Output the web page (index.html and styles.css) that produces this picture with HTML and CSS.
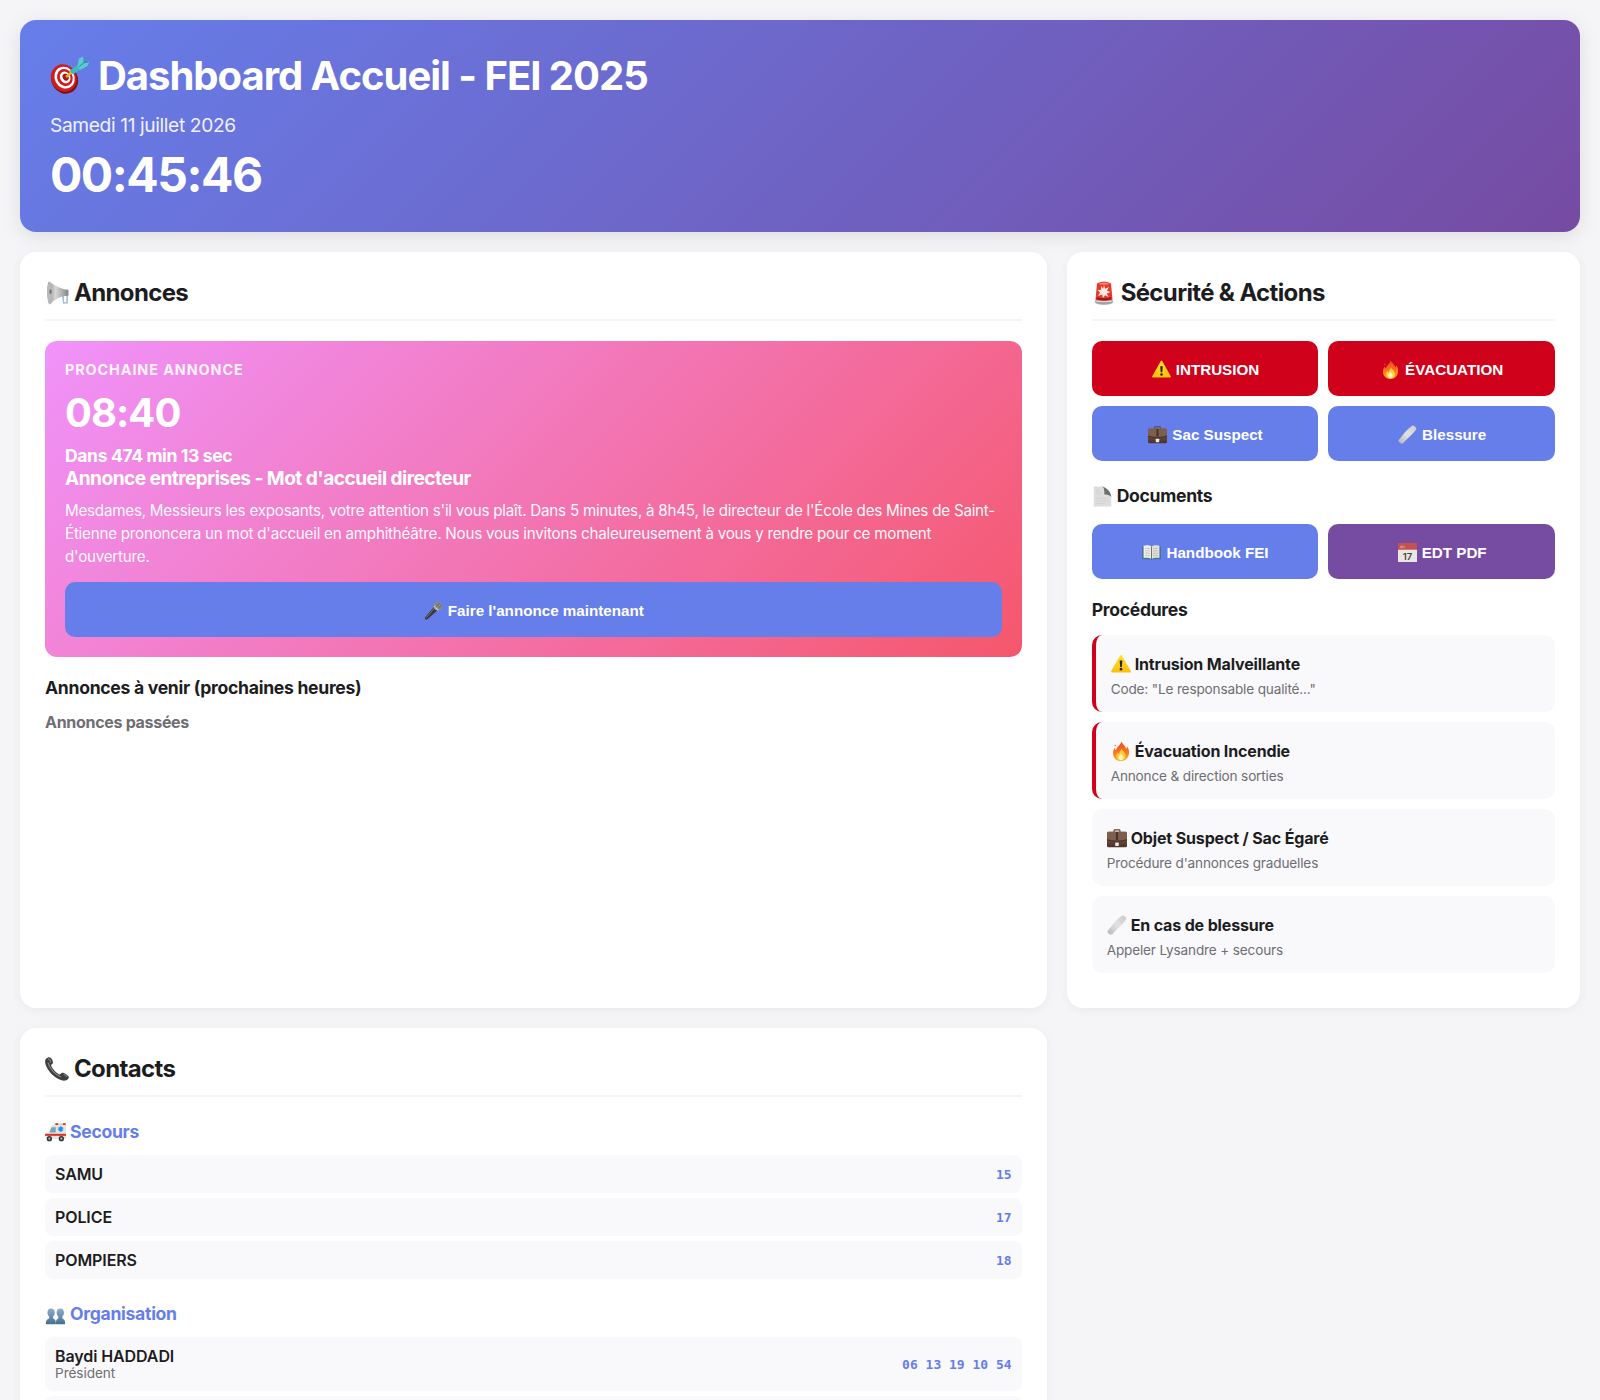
FILE: index.html
```html
<!DOCTYPE html>
<html lang="fr">
<head>
  <meta charset="UTF-8">
  <meta name="viewport" content="width=device-width, initial-scale=1.0">
  <title>Dashboard Accueil - FEI 2025</title>
  <link rel="stylesheet" href="styles.css">
</head>
<body>

  <!-- Pictogrammes partagés -->
  <svg class="sprite" aria-hidden="true">
    <defs>
      <linearGradient id="gMetal" x1="0" y1="0" x2="1" y2="0"><stop offset="0" stop-color="#8f8f8f"/><stop offset=".4" stop-color="#d6d6d6"/><stop offset="1" stop-color="#8a8a8a"/></linearGradient>
      <linearGradient id="gFire" x1="0" y1="0" x2="0" y2="1"><stop offset="0" stop-color="#e8452a"/><stop offset=".6" stop-color="#ff7a1c"/><stop offset="1" stop-color="#ffb02e"/></linearGradient>
      <linearGradient id="gWarn" x1="0" y1="0" x2="0" y2="1"><stop offset="0" stop-color="#ffe02e"/><stop offset="1" stop-color="#fdbf0d"/></linearGradient>
      <linearGradient id="gBag" x1="0" y1="0" x2="0" y2="1"><stop offset="0" stop-color="#8a6a58"/><stop offset="1" stop-color="#4a3026"/></linearGradient>
      <linearGradient id="gPeople" x1="0" y1="0" x2="0" y2="1"><stop offset="0" stop-color="#8fb0cb"/><stop offset="1" stop-color="#456f90"/></linearGradient>
      <linearGradient id="gBand" x1="0" y1="1" x2="1" y2="0"><stop offset="0" stop-color="#b4b4b4"/><stop offset=".5" stop-color="#e4e4e4"/><stop offset="1" stop-color="#c9c9c9"/></linearGradient>
    </defs>
    <symbol id="i-target" viewBox="0 0 40 40">
      <ellipse cx="14.6" cy="23.400" rx="13.200" ry="14.600" transform="rotate(-28 14.6 23.4)" fill="#7e1212"/>
      <ellipse cx="13.8" cy="22" rx="12.6" ry="14" transform="rotate(-28 13.8 22)" fill="#cf1d1d"/>
      <ellipse cx="14.6" cy="21.6" rx="9.9" ry="11.2" transform="rotate(-28 14.6 21.6)" fill="#fff"/>
      <ellipse cx="14.9" cy="21.6" rx="7.6" ry="8.8" transform="rotate(-28 14.9 21.6)" fill="#cf1d1d"/>
      <ellipse cx="15.2" cy="21.4" rx="5.1" ry="6.1" transform="rotate(-28 15.2 21.4)" fill="#fff"/>
      <ellipse cx="15.6" cy="21.2" rx="2.9" ry="3.6" transform="rotate(-28 15.6 21.2)" fill="#a81616"/>
      <path d="M16 21l6-5" stroke="#e0b62a" stroke-width="2.4"/>
      <path d="M19.5 14.500l9-6 3 4-8.500 6z" fill="#3fb9bd"/>
      <path d="M27.500 10.500l1.500-8 4-2 .5 6 6-1-2 4.500-7.500 4z" fill="#58cdd0"/>
      <path d="M29 11l5-4.500 4.500-.5" stroke="#238a92" stroke-width="1" fill="none"/>
    </symbol>
    <symbol id="i-mega" viewBox="0 0 24 24">
      <path d="M16.500 13h6.500v9.500l-5 .2z" fill="#a8c3d6"/>
      <path d="M19 14.500h2.300V21H19z" fill="#fff"/>
      <path d="M4 .5C9 4 16 8 23 9v5.500C15 15.200 9 18.500 5 23.500 2 22 1.500 2 4 .5z" fill="url(#gMetal)"/>
      <ellipse cx="4.500" cy="12" rx="2.300" ry="11.300" fill="#b9b9b9"/>
      <ellipse cx="5.500" cy="10.500" rx="1.200" ry="2.600" fill="#777"/>
      <path d="M21 8.700h2.500v5.900H21z" fill="#8e8e8e"/>
    </symbol>
    <symbol id="i-siren" viewBox="0 0 24 24">
      <path d="M3.500 18.500h17l.5 3c-2 3-16 3-18 0z" fill="#9fa4a6"/>
      <path d="M4.500 19.500h15v1.500h-15z" fill="#ddd"/>
      <path d="M5 2.500C8 .3 16 .3 19 2.500l1.500 16c-4 1.800-13 1.800-17 0z" fill="#e23a2c"/>
      <path d="M6 2.800c3-1.500 9-1.500 12 0-3 1.200-9 1.200-12 0z" fill="#f58a7c"/>
      <path d="M5 16c4 1.600 10 1.600 14 0l.3 2.300c-4 1.500-11 1.500-15 0z" fill="#a8170f"/>
      <path d="M12 4l1.200 3.800L17 6l-2 3.800 3.500 1.200-3.600 1.500 1.800 3.500-3.800-1.800L11 17l-.8-3.400L6 15l2-3.500L5.500 9l3.700-.2L9 5l2.200 2.500z" fill="#ffe9e6"/>
    </symbol>
    <symbol id="i-warn" viewBox="0 0 24 24">
      <path d="M11 1.700c.5-.8 1.500-.8 2 0l10.700 18.700c.5.900 0 1.800-1 1.800H1.300c-1 0-1.500-.9-1-1.800z" fill="url(#gWarn)"/>
      <path d="M10.400 7.800h3.200l-.6 7.800h-2z" fill="#2b2410"/>
      <circle cx="12" cy="18.200" r="1.600" fill="#2b2410"/>
    </symbol>
    <symbol id="i-fire" viewBox="0 0 24 24">
      <path d="M12.500 0c.5 4 5 5 5.500 9.500 1-.8 1.300-2 1.200-3.200 2.300 3 2.800 6 2.300 9.200C20.800 20.500 17 24 12 24 6.500 24 2.800 20.300 2.500 15.500 2.300 12 3.500 9.800 4.500 8c.2 1.500.7 2.500 1.600 3.200C6.500 6.500 12 5 12.500 0z" fill="url(#gFire)"/>
      <path d="M12.800 9c.3 3 4.700 4 4.700 9 0 3-2.200 5.300-5.300 5.300C9 23.300 6.500 21 6.500 18c0-2.300 1-3.500 1.800-4.500.2 1.200.6 1.800 1.300 2.200C9.800 12.800 12.300 11.500 12.800 9z" fill="#ffcf3a"/>
      <path d="M12 15.500c2 1.500 3 2.800 3 4.500 0 1.800-1.300 3-3 3s-3-1.200-3-3c0-1.700 1-3 3-4.500z" fill="#fff4b0"/>
      <circle cx="5" cy="5.500" r=".9" fill="#f0603a"/>
    </symbol>
    <symbol id="i-bag" viewBox="0 0 24 24">
      <path d="M8.500 5V3.200c0-.6.400-1 1-1h5c.6 0 1 .4 1 1V5" fill="none" stroke="#5d4235" stroke-width="1.500"/>
      <rect x="0" y="4.500" width="24" height="18.500" rx="1.800" fill="url(#gBag)"/>
      <path d="M0 6.300C0 5.300.800 4.500 1.800 4.500h20.400c1 0 1.800.800 1.800 1.800V14c-7 2.300-17 2.300-24 0z" fill="#7d5f4e"/>
      <path d="M0 14c7 2.300 17 2.300 24 0" fill="none" stroke="#36211a" stroke-width=".9"/>
      <path d="M10.700 5h2.600v9.500h-2.600z" fill="#4a3026"/>
      <rect x="9.800" y="17.300" width="4.400" height="4.400" rx=".8" fill="#eee5dc"/>
    </symbol>
    <symbol id="i-band" viewBox="0 0 24 24">
      <path d="M1 18.500C5 14.500 11 5 18 .8c1.500-.8 6 2.200 5 4.500C19.500 11 11 17 6.500 23c-1.800 2-7.500-2-5.500-4.500z" fill="url(#gBand)"/>
      <path d="M8.500 9.700c2.500.8 4.500 2.700 5.500 5.300M13 5c2.500.8 4.500 2.500 5.700 5" stroke="#cfcfcf" stroke-width=".7" fill="none"/>
    </symbol>
    <symbol id="i-page" viewBox="0 0 24 24">
      <path d="M2 .5h11l9 10.500v12.500H2z" fill="#dedede"/>
      <path d="M11 .5c3.500.8 3 5.500 3.200 9.200 3-.3 6.800.5 7.800 3C22 7 17 1.500 11 .5z" fill="#6d6d6d"/>
      <path d="M4.500 4h4M4.500 6.500h6M4.500 9h6M4.500 14h14M4.500 17h14M4.500 20h10" stroke="#cdcdcd" stroke-width=".8"/>
    </symbol>
    <symbol id="i-book" viewBox="0 0 24 24">
      <path d="M0 4.500h24v16H14l-2 1.500-2-1.500H0z" fill="#3f7896"/>
      <path d="M12 4.500C9.500 2.500 4.500 2.500 2 3.500V19c3-.8 7.500-.6 10 1.200z" fill="#f1efe9"/>
      <path d="M12 4.500c2.500-2 7.500-2 10-1V19c-3-.8-7.500-.6-10 1.200z" fill="#e4e1d9"/>
      <path d="M12 4.500v15.700" stroke="#6b6b6b" stroke-width="1.200"/>
      <path d="M4 7c2-.5 4-.4 6 .3M4 10c2-.5 4-.4 6 .3M4 13c2-.5 4-.4 6 .3M4 16c2-.5 4-.4 6 .3M14 7.300c2-.7 4-.8 6-.3M14 10.300c2-.7 4-.8 6-.3M14 13.300c2-.7 4-.8 6-.3M14 16.300c2-.7 4-.8 6-.3" stroke="#a9a9a9" stroke-width=".8" fill="none"/>
    </symbol>
    <symbol id="i-cal" viewBox="0 0 24 24">
      <path d="M0 0h24v24H0z" fill="#e9e7e3"/>
      <path d="M0 0h24v8.500H0z" fill="#c8504b"/>
      <path d="M2.500 6.500l1.200-3 1 3 1-3 1.200 3M8 3.500v3" stroke="#eaa6a0" stroke-width=".8" fill="none"/>
      <circle cx="5.500" cy="1.700" r="1.200" fill="#6a6fd0"/>
      <circle cx="18.500" cy="1.700" r="1.200" fill="#6a6fd0"/>
      <text x="12" y="21.500" class="cal-day">17</text>
    </symbol>
    <symbol id="i-phone" viewBox="0 0 24 24">
      <path d="M1 1.800C3.500-.5 5.500-.3 7 2.500c1.200 2.300 1.500 3.700-.2 4.800-.8.600-.8 1.200-.3 2.200 1.700 3 4 5.500 7 7.500.9.600 1.600.5 2.200-.3 1.100-1.500 2.500-1.300 5 .2 3.300 2 4 3.500 2.300 5.200-1.700 1.900-5 2.200-8.500.5C8 19.500 2.500 13.500.6 7.500-.2 5 0 3 1 1.800z" fill="#3d3f40"/>
      <path d="M3 1.800c1.200 0 2.500 1.800 2.800 3.500M3 5.500c1.500 6 7 12 13 14.500M18.500 17.500c1.500.3 3.200 1.500 3.700 2.500" stroke="#85888a" stroke-width="1.100" fill="none"/>
    </symbol>
    <symbol id="i-ambu" viewBox="0 0 24 24">
      <path d="M10 3h14v16H1c-1-2-.8-5 .3-6.500L5 11.500 7 5.500C7.500 4 8.500 3 10 3z" fill="#e6e2df"/>
      <path d="M10.500 1.500h13.500v2h-13.500z" fill="#d8d4d0"/>
      <path d="M12 1.500h3v2h-3zM20.500 1.500h3v2h-3z" fill="#d9302b"/>
      <path d="M7.500 6h4.700v6H5z" fill="#6fa9b8"/>
      <path d="M0 13.500h24v2.300H0z" fill="#d9302b"/>
      <path d="M18 5v6M15.400 6.500l5.200 3M20.600 6.500l-5.200 3" stroke="#1798e0" stroke-width="2"/>
      <circle cx="5" cy="19" r="3" fill="#333"/><circle cx="5" cy="19" r="1.200" fill="#bbb"/>
      <circle cx="18.700" cy="19" r="3" fill="#333"/><circle cx="18.700" cy="19" r="1.200" fill="#bbb"/>
    </symbol>
    <symbol id="i-people" viewBox="0 0 24 24">
      <path d="M7 5c2.700 0 4.200 1.800 4.200 4.700 0 2-.7 3.600-1.900 4.600v2.200c1.700 1 3.200.9 3.200 6.500H1c0-5.600 2-5.500 3.700-6.500v-2.200C3.500 13.300 2.800 11.700 2.800 9.700 2.800 6.800 4.300 5 7 5z" fill="url(#gPeople)"/>
      <path d="M17.500 5c2.700 0 4.200 1.800 4.200 4.700 0 2-.7 3.600-1.900 4.600v2.200c1.700 1 3.200.9 3.200 6.500H12.500c0-5.600 1-5.500 2.700-6.500v-2.200c-1.200-1-1.900-2.600-1.900-4.600C13.300 6.800 14.800 5 17.500 5z" fill="url(#gPeople)"/>
    </symbol>
    <symbol id="i-mic" viewBox="0 0 24 24">
      <path d="M13 7l4.500 4.500L4 23.500c-1.500.8-3.500-1.300-2.700-2.800z" fill="#3a3a3c"/>
      <path d="M13.500 8.500L3 21" stroke="#77787a" stroke-width="1.200"/>
      <circle cx="17.500" cy="6.500" r="5.600" fill="#8c8d8d"/>
      <path d="M12.800 6.500l5.300 5.300" stroke="#d7d7d7" stroke-width="1.500"/>
      <path d="M15 3l6 6M18 2l4 4M20 2.500l-6 6M22.500 5l-5 5" stroke="#5b5c5c" stroke-width=".7"/>
    </symbol>
  </svg>

  <div class="dashboard">
    <header class="header">
      <h1><svg class="icon icon-xl"><use href="#i-target"/></svg>Dashboard Accueil - FEI 2025</h1>
      <div class="date">Samedi 11 juillet 2026</div>
      <div class="clock">00:45:46</div>
    </header>

    <section class="card">
      <h2><svg class="icon icon-lg"><use href="#i-mega"/></svg>Annonces</h2>
      <div class="next-annonce">
        <div class="label">PROCHAINE ANNONCE</div>
        <div class="time">08:40</div>
        <div class="countdown">Dans 474 min 13 sec</div>
        <div class="annonce-title">Annonce entreprises - Mot d'accueil directeur</div>
        <p>Mesdames, Messieurs les exposants, votre attention s'il vous plaît. Dans 5 minutes, à 8h45, le directeur de l'École des Mines de Saint-Étienne prononcera un mot d'accueil en amphithéâtre. Nous vous invitons chaleureusement à vous y rendre pour ce moment d'ouverture.</p>
        <button class="btn btn-block"><svg class="icon icon-sm"><use href="#i-mic"/></svg>Faire l'annonce maintenant</button>
      </div>
      <h3 class="upcoming">Annonces à venir (prochaines heures)</h3>
      <h4 class="past">Annonces passées</h4>
    </section>

    <section class="card">
      <h2><svg class="icon icon-lg"><use href="#i-siren"/></svg>Sécurité &amp; Actions</h2>
      <div class="actions">
        <button class="btn btn-danger"><svg class="icon icon-sm"><use href="#i-warn"/></svg>INTRUSION</button>
        <button class="btn btn-danger"><svg class="icon icon-sm"><use href="#i-fire"/></svg>ÉVACUATION</button>
        <button class="btn"><svg class="icon icon-sm"><use href="#i-bag"/></svg>Sac Suspect</button>
        <button class="btn"><svg class="icon icon-sm"><use href="#i-band"/></svg>Blessure</button>
      </div>
      <h3 class="documents"><svg class="icon icon-md"><use href="#i-page"/></svg>Documents</h3>
      <div class="actions">
        <button class="btn"><svg class="icon icon-sm"><use href="#i-book"/></svg>Handbook FEI</button>
        <button class="btn btn-purple"><svg class="icon icon-sm"><use href="#i-cal"/></svg>EDT PDF</button>
      </div>
      <h3 class="procedures">Procédures</h3>
      <div class="procedure urgent">
        <div class="procedure-title"><svg class="icon"><use href="#i-warn"/></svg>Intrusion Malveillante</div>
        <div class="procedure-text">Code: "Le responsable qualité..."</div>
      </div>
      <div class="procedure urgent">
        <div class="procedure-title"><svg class="icon"><use href="#i-fire"/></svg>Évacuation Incendie</div>
        <div class="procedure-text">Annonce &amp; direction sorties</div>
      </div>
      <div class="procedure">
        <div class="procedure-title"><svg class="icon"><use href="#i-bag"/></svg>Objet Suspect / Sac Égaré</div>
        <div class="procedure-text">Procédure d'annonces graduelles</div>
      </div>
      <div class="procedure">
        <div class="procedure-title"><svg class="icon"><use href="#i-band"/></svg>En cas de blessure</div>
        <div class="procedure-text">Appeler Lysandre + secours</div>
      </div>
    </section>

    <section class="card">
      <h2><svg class="icon icon-lg"><use href="#i-phone"/></svg>Contacts</h2>
      <div class="contact-group">
        <h3><svg class="icon icon-md"><use href="#i-ambu"/></svg>Secours</h3>
        <div class="contact"><div class="name">SAMU</div><div class="phone">15</div></div>
        <div class="contact"><div class="name">POLICE</div><div class="phone">17</div></div>
        <div class="contact"><div class="name">POMPIERS</div><div class="phone">18</div></div>
      </div>
      <div class="contact-group">
        <h3><svg class="icon icon-md"><use href="#i-people"/></svg>Organisation</h3>
        <div class="contact">
          <div>
            <div class="name">Baydi HADDADI</div>
            <div class="role">Président</div>
          </div>
          <div class="phone">06 13 19 10 54</div>
        </div>
        <div class="contact"></div>
      </div>
    </section>
  </div>

</body>
</html>
```
FILE: styles.css
```css
* {
  margin: 0;
  padding: 0;
  box-sizing: border-box;
}

body {
  font-family: Inter, 'Liberation Sans', sans-serif;
  background: #f5f5f7;
  color: #1d1d1f;
  height: 1400px;
  padding: 20px;
  overflow: hidden;
}

.sprite {
  position: absolute;
  width: 0;
  height: 0;
}

.cal-day {
  font: 600 12px Inter, sans-serif;
  letter-spacing: 0;
  fill: #444;
  text-anchor: middle;
}

.dashboard {
  display: grid;
  grid-template-columns: 2fr 1fr;
  gap: 20px;
}

/* Icônes */
.icon {
  width: 20px;
  height: 20px;
  margin-right: 4px;
  flex-shrink: 0;
}

.icon-sm {
  width: 19px;
  height: 19px;
  margin-right: 5px;
}

.icon-md {
  width: 21px;
  height: 21px;
}

.icon-lg {
  width: 24px;
  height: 24px;
  margin-right: 5px;
}

.icon-xl {
  width: 40px;
  height: 40px;
  margin-right: 8px;
}

h1, h2, h3, .procedure-title {
  display: flex;
  align-items: center;
}

/* En-tête */
.header {
  grid-column: 1 / -1;
  height: 212px;
  padding: 30px;
  border-radius: 16px;
  background: linear-gradient(135deg, #667eea 0%, #764ba2 100%);
  color: white;
  box-shadow: 0 4px 20px rgba(0, 0, 0, 0.1);
}

.header h1 {
  font-size: 40px;
  font-weight: 700;
  line-height: 51px;
  letter-spacing: -1.02px;
  margin-bottom: 12px;
}

.date {
  font-size: 19.2px;
  line-height: 24px;
  letter-spacing: -0.38px;
  opacity: 0.9;
}

.clock {
  margin-top: 10px;
  font-size: 48px;
  font-weight: 700;
  line-height: 55px;
  letter-spacing: -1.5px;
}

/* Cartes */
.card {
  background: white;
  border-radius: 16px;
  padding: 25px;
  box-shadow: 0 2px 10px rgba(0, 0, 0, 0.05);
}

.card h2 {
  font-size: 24px;
  font-weight: 700;
  line-height: 31px;
  letter-spacing: -0.65px;
  padding-bottom: 11px;
  border-bottom: 2px solid #f5f5f7;
  margin-bottom: 20px;
}

.card h3 {
  font-size: 17.6px;
  font-weight: 700;
  line-height: 22px;
  letter-spacing: -0.3px;
}

/* Prochaine annonce */
.next-annonce {
  padding: 20px;
  border-radius: 12px;
  background: linear-gradient(135deg, #f093fb 0%, #f5576c 100%);
  color: white;
}

.label {
  font-size: 14.4px;
  font-weight: 700;
  line-height: 18px;
  letter-spacing: 0.9px;
  opacity: 0.9;
}

.time {
  margin: 10px 0 8px;
  font-size: 40px;
  font-weight: 700;
  line-height: 48px;
  letter-spacing: -1px;
}

.countdown {
  font-size: 17.6px;
  font-weight: 700;
  line-height: 22px;
  letter-spacing: -0.4px;
}

.annonce-title {
  font-size: 19.2px;
  font-weight: 700;
  line-height: 22px;
  letter-spacing: -0.58px;
}

.next-annonce p {
  margin: 11px 0 13.6px;
  font-size: 15.2px;
  line-height: 22.8px;
  letter-spacing: -0.24px;
  opacity: 0.95;
}

.card .upcoming {
  margin: 20px 0 13px;
}

.past {
  font-size: 16px;
  font-weight: 700;
  line-height: 20px;
  letter-spacing: -0.3px;
  color: #6e6e73;
}

/* Boutons */
.actions {
  display: grid;
  grid-template-columns: 1fr 1fr;
  gap: 10px;
}

.btn {
  display: flex;
  align-items: center;
  justify-content: center;
  height: 55px;
  padding: 2px 0 0 1px;
  border: none;
  border-radius: 10px;
  background: #667eea;
  color: white;
  font-family: 'Liberation Sans', Arial, sans-serif;
  font-size: 15.2px;
  font-weight: 600;
  cursor: pointer;
}

.btn-block {
  width: 100%;
}

.btn-danger {
  background: #d0021b;
}

.btn-purple {
  background: #764ba2;
}

.card .documents {
  margin: 24px 0 17px;
}

.card .procedures {
  margin: 20px 0 14px;
}

/* Procédures */
.procedure {
  padding: 15px;
  margin-bottom: 10px;
  border-radius: 10px;
  background: #f9f9fb;
}

.procedure.urgent {
  border-left: 4px solid #d0021b;
}

.procedure-title {
  font-size: 16px;
  font-weight: 700;
  line-height: 28px;
  letter-spacing: -0.15px;
  margin-bottom: 3px;
}

.procedure-text {
  font-size: 13.6px;
  line-height: 16px;
  letter-spacing: -0.16px;
  color: #6e6e73;
}

/* Contacts */
.contact-group {
  margin-bottom: 24px;
}

.contact-group h3 {
  color: #667eea;
  margin-bottom: 12px;
}

.card h2 + .contact-group {
  margin-top: 24px;
}

.contact {
  display: flex;
  justify-content: space-between;
  align-items: center;
  min-height: 38px;
  padding: 10px;
  margin-bottom: 5px;
  border-radius: 8px;
  background: #f9f9fb;
}

.name {
  font-size: 16px;
  font-weight: 600;
  line-height: 18px;
  letter-spacing: -0.1px;
}

.role {
  font-size: 13.6px;
  line-height: 16px;
  letter-spacing: -0.05px;
  color: #6e6e73;
}

.phone {
  font-family: 'DejaVu Sans Mono', monospace;
  font-size: 13px;
  font-weight: 600;
  color: #667eea;
}
```
